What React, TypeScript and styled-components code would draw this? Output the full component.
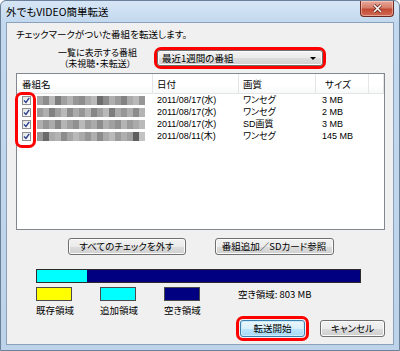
import React from "react";
import styled, { createGlobalStyle } from "styled-components";

const GlobalStyle = createGlobalStyle`
  html, body {
    margin: 0;
    padding: 0;
    background: #ffffff;
  }
  body {
    font-family: "Noto Sans CJK JP", "Noto Sans", sans-serif;
    font-size: 9.5px;
    color: #000;
  }
`;

const Window = styled.div`
  box-sizing: border-box;
  width: 400px;
  height: 351px;
  display: flex;
  flex-direction: column;
  padding: 0 5px 5px 5px;
  border: 1px solid #6b8099;
  border-radius: 6px 6px 0 0;
  background: linear-gradient(#d6e6f6 0px, #c2d8ee 22px, #bcd3ea 100%);
`;

const TitleBar = styled.div`
  height: 21px;
  display: flex;
  align-items: flex-start;
  justify-content: space-between;
`;

const Title = styled.div`
  font-size: 10.5px;
  line-height: 21px;
  font-feature-settings: "palt";
  color: #000;
`;

const CloseButton = styled.div`
  box-sizing: border-box;
  width: 34px;
  height: 16px;
  display: flex;
  align-items: center;
  justify-content: center;
  border: 1px solid #6e2a20;
  border-top: none;
  border-radius: 0 0 4px 4px;
  background: linear-gradient(#e9a99b 0%, #d77d6a 45%, #c24a34 55%, #d06a55 100%);
  box-shadow: inset 0 0 0 1px rgba(255, 220, 210, 0.5);
`;

const Client = styled.div`
  flex: 1;
  display: flex;
  flex-direction: column;
  padding: 4px 8px 3px 9px;
  border: 1px solid #8aa1bc;
  background: #f0f0f0;
  font-feature-settings: "palt";
`;

const Intro = styled.div`
  line-height: 14px;
`;

const FilterRow = styled.div`
  display: flex;
  align-items: center;
  margin-top: 6px;
`;

const FilterLabel = styled.div`
  width: 85px;
  margin-left: 39px;
  margin-right: 14px;
  text-align: center;
  font-size: 9px;
  line-height: 11px;
  white-space: nowrap;
`;

const Annotation = styled.div`
  border: 3px solid #ff0000;
  border-radius: 7px;
`;

const Combo = styled.div`
  box-sizing: border-box;
  width: 166px;
  height: 16px;
  display: flex;
  align-items: center;
  justify-content: space-between;
  padding: 0 6px 0 4px;
  border: 1px solid #707070;
  border-radius: 3px;
  background: linear-gradient(#f2f2f2 0%, #ebebeb 50%, #dddddd 50%, #cfcfcf 100%);
  box-shadow: inset 0 0 0 1px #fbfbfb;
`;

const Arrow = styled.span`
  width: 0;
  height: 0;
  border-left: 3px solid transparent;
  border-right: 3px solid transparent;
  border-top: 3px solid #000;
`;

const List = styled.div`
  position: relative;
  box-sizing: border-box;
  width: 369px;
  height: 157px;
  margin-top: 4px;
  border: 1px solid #828790;
  background: #fff;
`;

const HeaderRow = styled.div`
  display: flex;
  height: 19px;
  border-bottom: 1px solid #e5e5e5;
  background: linear-gradient(#ffffff 0%, #ffffff 60%, #f7f8f9 100%);
`;

const HeaderCell = styled.div<{ $w?: number; $pad: number }>`
  box-sizing: border-box;
  width: ${(p) => (p.$w ? `${p.$w}px` : "auto")};
  flex: ${(p) => (p.$w ? "none" : "1")};
  padding-left: ${(p) => p.$pad}px;
  padding-top: 2px;
  line-height: 17px;
  border-right: 1px solid #e5e5e5;
`;

const Row = styled.div`
  display: flex;
  height: 12px;
  align-items: center;
`;

const Cell = styled.div<{ $w: number; $pad: number }>`
  box-sizing: border-box;
  width: ${(p) => p.$w}px;
  height: 12px;
  padding-left: ${(p) => p.$pad}px;
  font-family: "Liberation Sans", "Noto Sans CJK JP", sans-serif;
  font-size: 9px;
  line-height: 12px;
  white-space: nowrap;
  overflow: hidden;
  display: flex;
  align-items: center;
`;

const CheckBox = styled.div`
  box-sizing: border-box;
  flex: none;
  width: 9px;
  height: 9px;
  margin-right: 6px;
  border: 1px solid #8e8f8f;
  background: linear-gradient(135deg, #e3e3e3, #ffffff);
  display: flex;
  align-items: center;
  justify-content: center;
`;

const Mosaic = styled.div`
  display: flex;
  height: 9px;
  filter: blur(0.7px);
`;

const Tile = styled.span<{ $shade: number }>`
  width: 6px;
  height: 9px;
  background: ${(p) => `rgb(${p.$shade}, ${p.$shade}, ${p.$shade})`};
`;

const CheckMark = styled(Annotation)`
  position: absolute;
  left: -2px;
  top: 18px;
  width: 15px;
  height: 50px;
`;

const ButtonRow = styled.div`
  display: flex;
  justify-content: center;
  gap: 29px;
  margin-top: 8px;
`;

const Button = styled.button<{ $w: number; $default?: boolean }>`
  box-sizing: border-box;
  width: ${(p) => p.$w}px;
  height: 17px;
  padding: 0;
  font-family: inherit;
  font-size: 9.5px;
  font-feature-settings: "palt";
  line-height: 15px;
  color: #000;
  border: 1px solid ${(p) => (p.$default ? "#3c7fb1" : "#707070")};
  border-radius: 3px;
  background: ${(p) =>
    p.$default
      ? "linear-gradient(#eaf6fd 0%, #d9f0fc 50%, #bee6fd 50%, #a7d9f5 100%)"
      : "linear-gradient(#f2f2f2 0%, #ebebeb 50%, #dddddd 50%, #cfcfcf 100%)"};
  box-shadow: inset 0 0 0 1px ${(p) => (p.$default ? "#cdeafb" : "#fbfbfb")};
`;

const Bar = styled.div`
  box-sizing: border-box;
  display: flex;
  width: 325px;
  height: 14px;
  margin: 14px 0 0 20px;
  border: 1px solid #2b2b2b;
  background: #000080;
`;

const BarFill = styled.div<{ $w: number }>`
  width: ${(p) => p.$w}px;
  background: #00ffff;
`;

const Legend = styled.div`
  display: flex;
  align-items: flex-start;
  margin: 4px 0 0 20px;
`;

const LegendItem = styled.div`
  width: 64px;
  display: flex;
  flex-direction: column;
`;

const Swatch = styled.div<{ $color: string }>`
  box-sizing: border-box;
  width: 36px;
  height: 14px;
  border: 1px solid #4a4a4a;
  background: ${(p) => p.$color};
`;

const LegendLabel = styled.div`
  margin-top: 3px;
  line-height: 12px;
`;

const FreeSpace = styled.div`
  margin-left: 10px;
  line-height: 14px;
`;

const Footer = styled.div`
  display: flex;
  align-items: center;
  justify-content: flex-end;
  gap: 11px;
`;

const DefaultWrap = styled(Annotation)`
  padding: 1px;
`;

const rows = [
  {
    date: "2011/08/17(水)",
    quality: "ワンセグ",
    size: "3 MB",
    tiles: [165, 140, 185, 125, 160, 180, 150, 140, 170, 185, 110, 140, 175, 155, 130, 170, 185, 150],
  },
  {
    date: "2011/08/17(水)",
    quality: "ワンセグ",
    size: "2 MB",
    tiles: [155, 175, 130, 160, 185, 140, 170, 150, 180, 135, 160, 185, 125, 170, 150, 175, 140, 180],
  },
  {
    date: "2011/08/17(水)",
    quality: "SD画質",
    size: "3 MB",
    tiles: [175, 150, 170, 135, 180, 160, 145, 185, 155, 170, 140, 175, 160, 145, 180, 155, 170, 185],
  },
  {
    date: "2011/08/11(木)",
    quality: "ワンセグ",
    size: "145 MB",
    tiles: [150, 105, 170, 180, 140, 165, 185, 170, 150, 175, 140, 170, 185, 155, 175, 160, 95, 195],
  },
];

const Tick = () => (
  <svg width="7" height="7" viewBox="0 0 7 7">
    <path d="M1 3.5 L3 5.5 L6.2 0.8" fill="none" stroke="#2a3f8f" strokeWidth="1.4" />
  </svg>
);

const App = () => {
  return (
    <>
      <GlobalStyle />
      <Window>
        <TitleBar>
          <Title>外でもVIDEO簡単転送</Title>
          <CloseButton>
            <svg width="11" height="9" viewBox="0 0 11 9">
              <path d="M2 1 L9 8 M9 1 L2 8" stroke="#5b1b12" strokeWidth="3" />
              <path d="M2 1 L9 8 M9 1 L2 8" stroke="#ffffff" strokeWidth="1.6" />
            </svg>
          </CloseButton>
        </TitleBar>
        <Client>
          <Intro>チェックマークがついた番組を転送します。</Intro>
          <FilterRow>
            <FilterLabel>
              一覧に表示する番組
              <br />
              （未視聴・未転送）
            </FilterLabel>
            <Annotation>
              <Combo>
                <span>最近1週間の番組</span>
                <Arrow />
              </Combo>
            </Annotation>
          </FilterRow>
          <List>
            <HeaderRow>
              <HeaderCell $w={136} $pad={5}>番組名</HeaderCell>
              <HeaderCell $w={86} $pad={4}>日付</HeaderCell>
              <HeaderCell $w={77} $pad={4}>画質</HeaderCell>
              <HeaderCell $w={53} $pad={9}>サイズ</HeaderCell>
              <HeaderCell $pad={0} />
            </HeaderRow>
            {rows.map((r, i) => (
              <Row key={i}>
                <Cell $w={136} $pad={5}>
                  <CheckBox>
                    <Tick />
                  </CheckBox>
                  <Mosaic>
                    {r.tiles.map((s, j) => (
                      <Tile key={j} $shade={s} />
                    ))}
                  </Mosaic>
                </Cell>
                <Cell $w={86} $pad={4}>{r.date}</Cell>
                <Cell $w={77} $pad={4}>{r.quality}</Cell>
                <Cell $w={53} $pad={6}>{r.size}</Cell>
              </Row>
            ))}
            <CheckMark />
          </List>
          <ButtonRow>
            <Button $w={118}>すべてのチェックを外す</Button>
            <Button $w={119}>番組追加／SDカード参照</Button>
          </ButtonRow>
          <Bar>
            <BarFill $w={50} />
          </Bar>
          <Legend>
            <LegendItem>
              <Swatch $color="#ffff00" />
              <LegendLabel>既存領域</LegendLabel>
            </LegendItem>
            <LegendItem>
              <Swatch $color="#00ffff" />
              <LegendLabel>追加領域</LegendLabel>
            </LegendItem>
            <LegendItem>
              <Swatch $color="#000080" />
              <LegendLabel>空き領域</LegendLabel>
            </LegendItem>
            <FreeSpace>空き領域: 803 MB</FreeSpace>
          </Legend>
          <Footer>
            <DefaultWrap>
              <Button $w={65} $default>
                転送開始
              </Button>
            </DefaultWrap>
            <Button $w={65}>キャンセル</Button>
          </Footer>
        </Client>
      </Window>
    </>
  );
};

export default App;
